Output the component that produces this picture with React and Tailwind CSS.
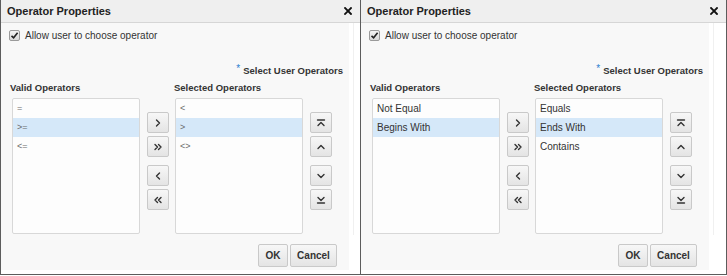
import React from "react";

const FONT = { fontFamily: '"Liberation Sans", Arial, sans-serif' };

function Icon({ type }) {
  const common = {
    width: 10,
    height: 10,
    viewBox: "0 0 10 10",
    fill: "none",
    stroke: "#333",
    strokeWidth: 1.4,
    strokeLinecap: "round",
    strokeLinejoin: "round",
  };
  switch (type) {
    case "right":
      return (
        <svg {...common}>
          <path d="M3.5 2 L6.5 5 L3.5 8" />
        </svg>
      );
    case "rightAll":
      return (
        <svg {...common}>
          <path d="M2 2.5 L4.5 5 L2 7.5" />
          <path d="M5.5 2.5 L8 5 L5.5 7.5" />
        </svg>
      );
    case "left":
      return (
        <svg {...common}>
          <path d="M6.5 2 L3.5 5 L6.5 8" />
        </svg>
      );
    case "leftAll":
      return (
        <svg {...common}>
          <path d="M4.5 2.5 L2 5 L4.5 7.5" />
          <path d="M8 2.5 L5.5 5 L8 7.5" />
        </svg>
      );
    case "top":
      return (
        <svg {...common}>
          <path d="M1.5 2 L8.5 2" />
          <path d="M2 7.5 L5 4.5 L8 7.5" />
        </svg>
      );
    case "up":
      return (
        <svg {...common}>
          <path d="M2 6.5 L5 3.5 L8 6.5" />
        </svg>
      );
    case "down":
      return (
        <svg {...common}>
          <path d="M2 3.5 L5 6.5 L8 3.5" />
        </svg>
      );
    case "bottom":
      return (
        <svg {...common}>
          <path d="M2 2.5 L5 5.5 L8 2.5" />
          <path d="M1.5 8 L8.5 8" />
        </svg>
      );
    default:
      return null;
  }
}

function IconButton({ type }) {
  return (
    <div className="w-[22px] h-[21px] flex items-center justify-center rounded-[2px] border border-[#c9c9c9] bg-gradient-to-b from-[#f7f7f7] to-[#e4e4e4]">
      <Icon type={type} />
    </div>
  );
}

function ListBox({ items, selected, symbols }) {
  return (
    <div className="w-[128px] h-[136px] rounded-[2px] border border-[#d8d8d8] bg-[#fdfdfd] flex flex-col">
      {items.map((it, i) => (
        <div
          key={i}
          className={
            "h-[19px] flex items-center pl-[4px] " +
            (i === selected ? "bg-[#d5e8f9] " : "") +
            (symbols ? "text-[9px] text-[#6a6a6a]" : "text-[10px] text-[#333]")
          }
        >
          {it}
        </div>
      ))}
    </div>
  );
}

function ButtonCol({ types }) {
  return (
    <div className="flex flex-col pt-[14px]">
      <div className="flex flex-col gap-[3px]">
        <IconButton type={types[0]} />
        <IconButton type={types[1]} />
      </div>
      <div className="flex flex-col gap-[3px] mt-[8px]">
        <IconButton type={types[2]} />
        <IconButton type={types[3]} />
      </div>
    </div>
  );
}

function Panel({ width, valid, selected, validSel, selSel, symbols, last }) {
  return (
    <div
      className={
        "h-[275px] flex flex-col bg-white border-b border-[#5c5c5c] " +
        (last ? "border-r" : "border-l border-r")
      }
      style={{ width }}
    >
      <div className="h-[23px] shrink-0 flex items-center justify-between pl-[6px] pr-[8px] bg-[#efefef] border-b border-[#d6d6d6]">
        <span className="text-[11px] font-bold text-[#222]">Operator Properties</span>
        <svg width="8" height="8" viewBox="0 0 8 8" stroke="#111" strokeWidth="1.8" strokeLinecap="square">
          <path d="M1 1 L7 7 M7 1 L1 7" />
        </svg>
      </div>
      <div className="flex flex-1">
        <div className="w-[348px] h-[247px] bg-[#f8f8f8] flex flex-col">
          <div className="h-[14px] mt-[5px] flex items-center pl-[8px]">
            <div className="w-[11px] h-[11px] rounded-[2px] border border-[#9a9a9a] bg-gradient-to-b from-[#f4f4f4] to-[#d9d9d9] flex items-center justify-center">
              <svg width="9" height="9" viewBox="0 0 9 9" fill="none" stroke="#222" strokeWidth="1.6">
                <path d="M1.5 4.8 L3.6 6.8 L7.6 1.8" />
              </svg>
            </div>
            <span className="ml-[5px] text-[10px] text-[#333]">Allow user to choose operator</span>
          </div>
          <div className="h-[12px] mt-[23px] flex items-center justify-end pr-[6px]">
            <span className="text-[10px] text-[#2f7fd0] mr-[3px] -mt-[5px] leading-none">*</span>
            <span className="text-[9.5px] font-bold text-[#333]">Select User Operators</span>
          </div>
          <div className="h-[12px] mt-[5px] flex items-center text-[9.5px] font-bold text-[#333]">
            <span className="ml-[9px] w-[164px]">Valid Operators</span>
            <span>Selected Operators</span>
          </div>
          <div className="flex mt-[4px] pl-[11px]">
            <ListBox items={valid} selected={validSel} symbols={symbols} />
            <div className="ml-[7px]">
              <ButtonCol types={["right", "rightAll", "left", "leftAll"]} />
            </div>
            <div className="ml-[6px]">
              <ListBox items={selected} selected={selSel} symbols={symbols} />
            </div>
            <div className="ml-[7px]">
              <ButtonCol types={["top", "up", "down", "bottom"]} />
            </div>
          </div>
          <div className="flex justify-end gap-[2px] pr-[12px] mt-[10px]">
            <div className="w-[30px] h-[23px] flex items-center justify-center rounded-[2px] border border-[#c9c9c9] bg-gradient-to-b from-[#f7f7f7] to-[#e4e4e4] text-[10px] font-bold text-[#333]">
              OK
            </div>
            <div className="w-[47px] h-[23px] flex items-center justify-center rounded-[2px] border border-[#c9c9c9] bg-gradient-to-b from-[#f7f7f7] to-[#e4e4e4] text-[10px] font-bold text-[#333]">
              Cancel
            </div>
          </div>
        </div>
        <div className="flex-1 bg-white flex">
          <div className="ml-[4px] mt-[0px] w-[1px] h-[212px] bg-[#f0f0f0]" />
        </div>
      </div>
    </div>
  );
}

export default function App() {
  return (
    <div className="w-[727px] h-[276px] bg-white flex" style={FONT}>
      <Panel
        width={361}
        valid={["=", ">=", "<="]}
        selected={["<", ">", "<>"]}
        validSel={1}
        selSel={1}
        symbols
      />
      <Panel
        width={366}
        valid={["Not Equal", "Begins With"]}
        selected={["Equals", "Ends With", "Contains"]}
        validSel={1}
        selSel={1}
        last
      />
    </div>
  );
}
